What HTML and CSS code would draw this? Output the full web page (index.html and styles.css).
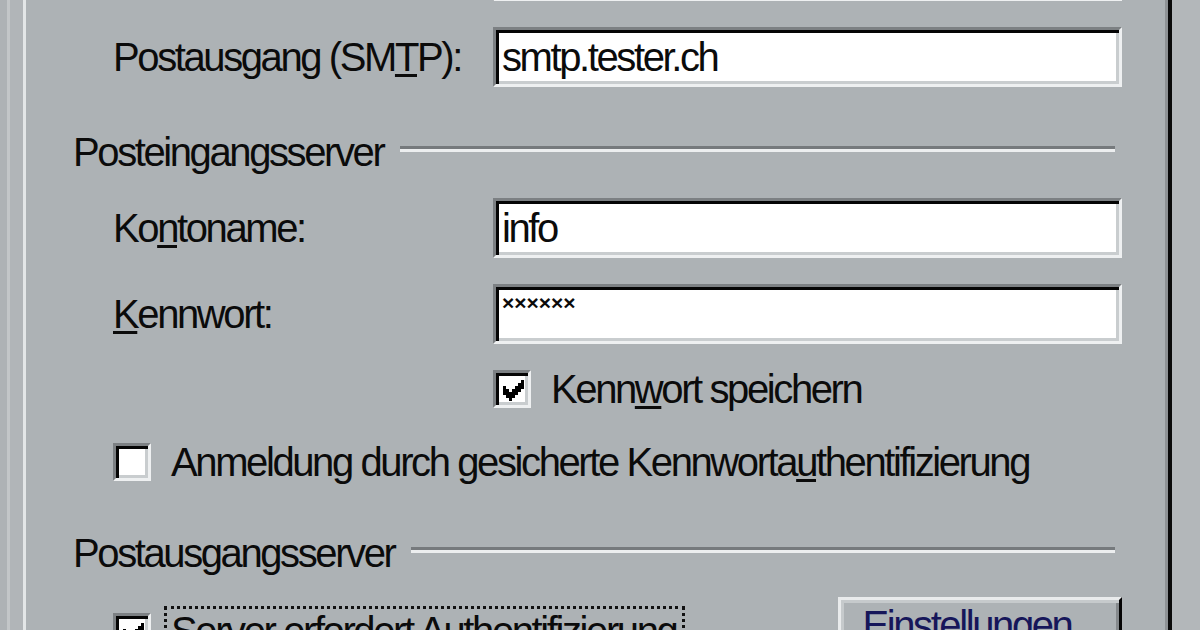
FILE: index.html
```html
<!DOCTYPE html>
<html lang="de">
<head>
<meta charset="utf-8">
<title>Konteneigenschaften – Server</title>
<link rel="stylesheet" href="styles.css">
</head>
<body>
<div class="window">
  <div class="frame-left"></div>
  <div class="tabpage">
    <div class="row row-first">
      <span class="label">Posteingang (<u>P</u>OP3):</span>
      <div class="edit"><span class="edit-text">pop.tester.ch</span></div>
    </div>
    <div class="row row-next">
      <span class="label">Postausgang (SM<u>T</u>P):</span>
      <div class="edit"><span class="edit-text">smtp.tester.ch</span></div>
    </div>
    <div class="group group-in">
      <span class="group-title">Posteingangsserver</span>
      <span class="etch"></span>
    </div>
    <div class="row row-next">
      <span class="label">Ko<u>n</u>toname:</span>
      <div class="edit"><span class="edit-text">info</span></div>
    </div>
    <div class="row row-next">
      <span class="label"><u>K</u>ennwort:</span>
      <div class="edit edit-password"><span class="mask">××××××</span></div>
    </div>
    <div class="check-row check-save">
      <span class="checkbox">
        <svg class="tick" viewBox="0 0 7 7" shape-rendering="crispEdges"><path d="M6 0h1v3h-1zM5 1h1v3h-1zM4 2h1v3h-1zM3 3h1v3h-1zM2 4h1v3h-1zM1 3h1v3h-1zM0 2h1v3h-1z" fill="#000"/></svg>
      </span>
      <span class="check-label">Kenn<u>w</u>ort speichern</span>
    </div>
    <div class="check-row check-spa">
      <span class="checkbox"></span>
      <span class="check-label">Anmeldung durch gesicherte Kennworta<u>u</u>thentifizierung</span>
    </div>
    <div class="group group-out">
      <span class="group-title">Postausgangsserver</span>
      <span class="etch"></span>
    </div>
    <div class="bottom-row">
      <span class="checkbox checkbox-bottom">
        <svg class="tick" viewBox="0 0 7 7" shape-rendering="crispEdges"><path d="M6 0h1v3h-1zM5 1h1v3h-1zM4 2h1v3h-1zM3 3h1v3h-1zM2 4h1v3h-1zM1 3h1v3h-1zM0 2h1v3h-1z" fill="#000"/></svg>
      </span>
      <span class="check-label focus">Server erfordert Authentifizierung</span>
      <button class="button" type="button">Einstellungen...</button>
    </div>
  </div>
  <div class="frame-right"></div>
</div>
</body>
</html>
```
FILE: styles.css
```css
* { box-sizing: border-box; }

html, body {
  margin: 0;
  padding: 0;
  background: #adb2b5;
}

body {
  font-family: "Liberation Sans", Arial, sans-serif;
  font-size: 40px;
  letter-spacing: -2.4px;
  color: #0b0b0b;
}

u { text-decoration-thickness: 3px; text-underline-offset: 3px; }

.window {
  display: flex;
  width: 1200px;
  height: 630px;
  overflow: hidden;
}

.frame-left {
  width: 23px;
  flex: none;
  background: linear-gradient(to right, #aeb2b5 0 7px, #c3c6c8 7px 10px, #b1b5b8 10px 23px);
}

.frame-right {
  width: 28px;
  flex: none;
  background: #b3b7ba;
}

.tabpage {
  flex: 1 1 0;
  min-width: 0;
  display: flex;
  flex-direction: column;
  border-left: 3px solid #e3e6e7;
  border-right: 4px solid #0a0a0a;
  box-shadow: inset -3px 0 0 #8e9295;
  padding: 0 46px 0 47px;
  background: #adb2b5;
}

/* label + edit rows */
.row {
  display: flex;
  align-items: center;
  height: 60px;
  padding-left: 40px;
  flex: none;
  min-width: 0;
}
.row-first { margin-top: -59px; }
.row-next { margin-top: 26px; }

.label {
  width: 380px;
  flex: none;
  white-space: nowrap;
  line-height: 40px;
}

.edit {
  flex: 1 1 0;
  min-width: 0;
  height: 60px;
  display: flex;
  align-items: center;
  background: #fff;
  border: 3px solid;
  border-color: #7c8083 #eef0f1 #eef0f1 #7c8083;
  box-shadow: inset 3px 3px 0 #050505, inset -3px -3px 0 #c9cdcf;
  padding-left: 6px;
  overflow: hidden;
}
.edit-text {
  line-height: 40px;
  white-space: nowrap;
}
.edit-password { align-items: flex-start; }
.mask {
  font-size: 21px;
  font-weight: bold;
  line-height: 22px;
  letter-spacing: 0;
  padding-top: 5px;
}

/* group headers */
.group {
  display: flex;
  align-items: center;
  height: 40px;
  flex: none;
  min-width: 0;
}
.group-in { margin-top: 45px; }
.group-out { margin-top: 51px; }
.group-title {
  line-height: 40px;
  white-space: nowrap;
}
.etch {
  flex: 1 1 0;
  height: 6px;
  margin: 0 7px 6px 17px;
  border-top: 3px solid #767a7d;
  border-bottom: 3px solid #eceeef;
}

/* checkboxes */
.check-row {
  display: flex;
  align-items: center;
  gap: 20px;
  height: 40px;
  flex: none;
  min-width: 0;
}
.check-save { margin-top: 25px; padding-left: 420px; }
.check-spa { margin-top: 33px; padding-left: 40px; }

.checkbox {
  width: 38px;
  height: 38px;
  flex: none;
  display: flex;
  align-items: center;
  justify-content: center;
  background: #fff;
  border: 3px solid;
  border-color: #7c8083 #eef0f1 #eef0f1 #7c8083;
  box-shadow: inset 3px 3px 0 #050505, inset -3px -3px 0 #c9cdcf;
}
.tick {
  width: 21px;
  height: 21px;
  display: block;
  margin: 3px 0 0 3px;
}
.check-label {
  line-height: 40px;
  white-space: nowrap;
}

/* bottom row */
.bottom-row {
  display: flex;
  align-items: flex-start;
  padding-left: 40px;
  margin-top: 24px;
  flex: none;
  min-width: 0;
}
.checkbox-bottom { margin-top: 16px; }
.focus {
  margin: 9px 0 0 13px;
  padding: 2px 6px 6px 4px;
  border: 3px dotted #111;
}
.button {
  margin-left: auto;
  width: 284px;
  height: 72px;
  flex: none;
  font: inherit;
  letter-spacing: -2.4px;
  color: #16165a;
  background: #adb2b5;
  border: 3px solid;
  border-color: #e9ebec #050505 #050505 #e9ebec;
  box-shadow: inset 3px 3px 0 #c6cacc, inset -3px -3px 0 #85898c;
  padding: 5px 0 0;
  line-height: 40px;
  display: flex;
  justify-content: center;
  align-items: flex-start;
}
```
